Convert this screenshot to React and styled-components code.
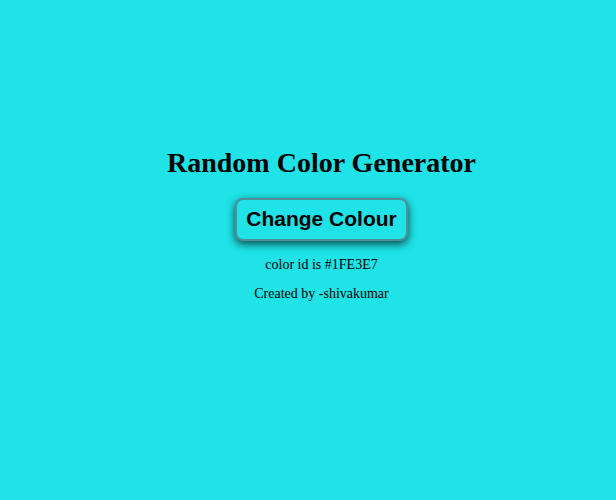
import React, { useState } from 'react';
import styled, { createGlobalStyle } from 'styled-components';

const GlobalStyle = createGlobalStyle`
	body {
		margin: 0;
		font-family: "Liberation Serif", "Times New Roman", serif;
	}
`;

const Page = styled.div`
	min-height: 500px;
	background: ${props => props.bg};
	display: flex;
	flex-direction: column;
	align-items: center;
	padding: 147px 0 0 27px;
	box-sizing: border-box;
`;

const Title = styled.h1`
	font-size: 28px;
	font-weight: bold;
	margin: 0 0 19px;
	color: #000;
`;

const ChangeButton = styled.button`
	font-family: "Liberation Sans", Arial, sans-serif;
	font-size: 21px;
	font-weight: bold;
	color: #000;
	background: ${props => props.bg};
	border: 2px solid #4f8f95;
	border-radius: 8px;
	padding: 7px 9px 8px;
	box-shadow: 0 3px 8px rgba(0, 0, 0, 0.7);
	cursor: pointer;
`;

const Info = styled.p`
	font-size: 14px;
	margin: ${props => props.first ? '16px' : '13px'} 0 0;
	color: #000;
`;

export default function App() {
	const [colour, setColour] = useState('#1FE3E7');

	const change = () => {
		const hex = '#' + Math.floor(Math.random() * 0xffffff).toString(16).padStart(6, '0').toUpperCase();
		setColour(hex);
	};

	return (
		<>
			<GlobalStyle />
			<Page bg={colour}>
				<Title>Random Color Generator</Title>
				<ChangeButton bg={colour} onClick={change}>Change Colour</ChangeButton>
				<Info first>color id is {colour}</Info>
				<Info>Created by -shivakumar</Info>
			</Page>
		</>
	);
}
